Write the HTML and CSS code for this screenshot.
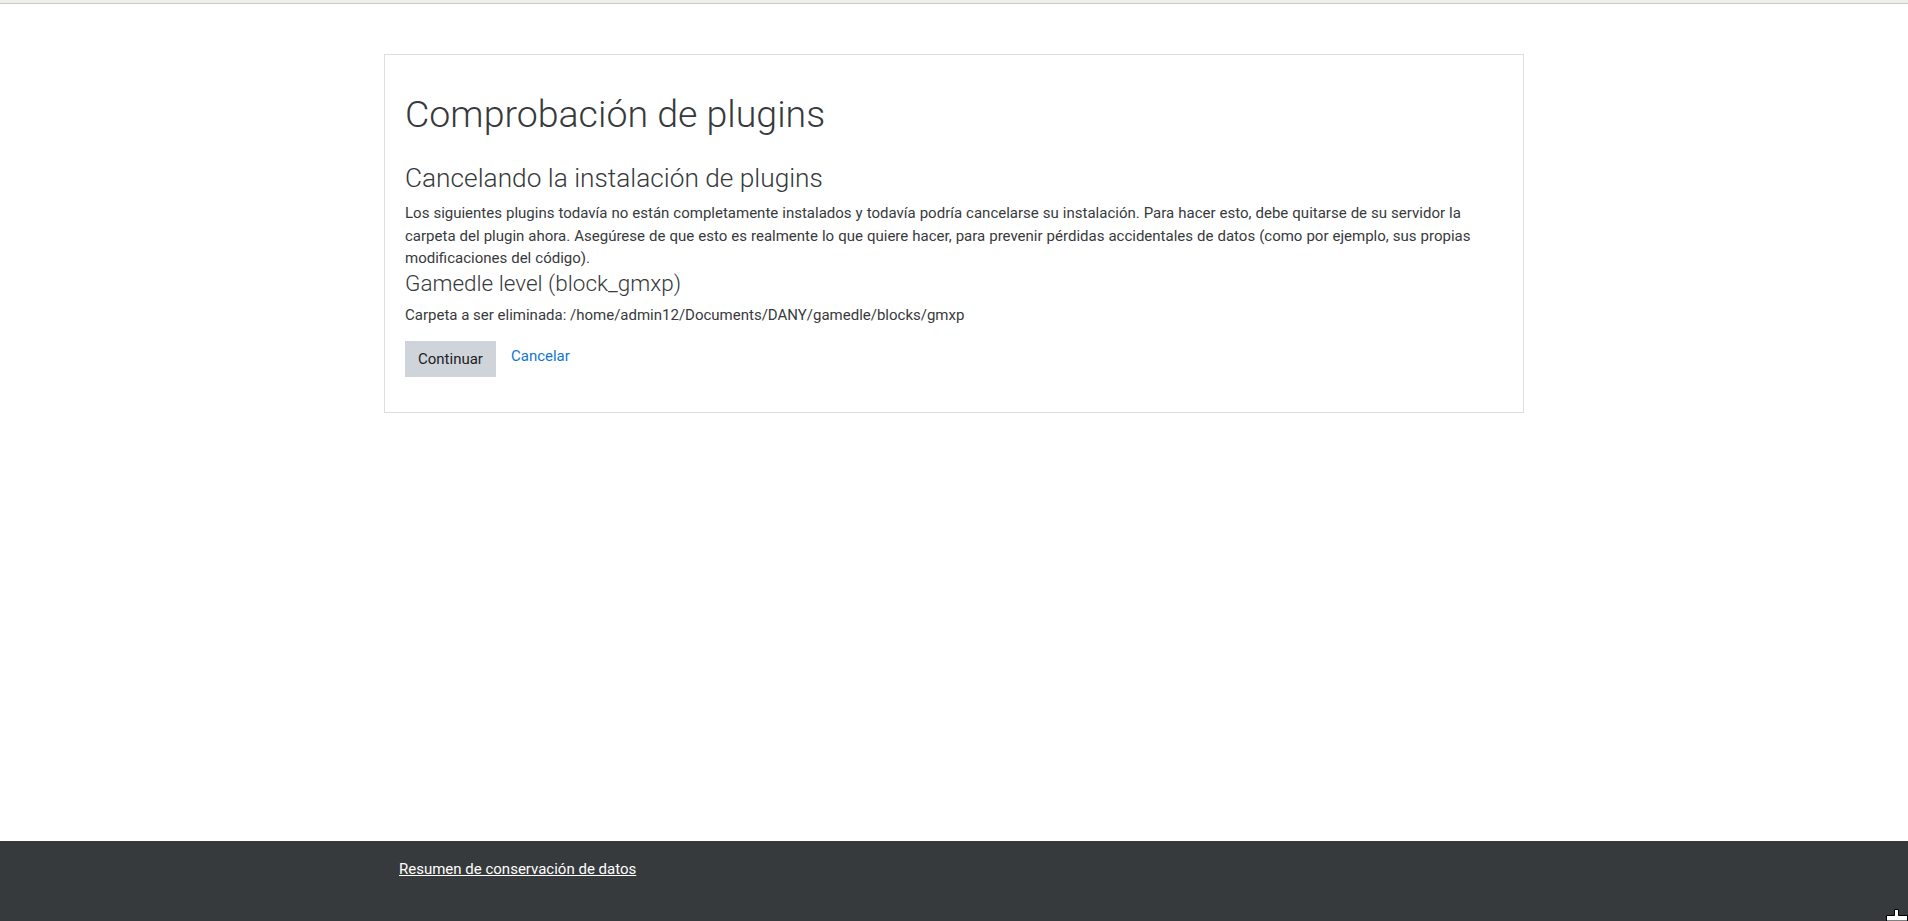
FILE: index.html
```html
<!DOCTYPE html>
<html lang="es">
<head>
<meta charset="utf-8">
<title>Comprobación de plugins</title>
<link rel="stylesheet" href="styles.css">
</head>
<body>
<div class="page">
  <div class="topbar"></div>
  <main class="main">
    <div class="card">
      <div class="card-body">
        <h1 class="title">Comprobación de plugins</h1>
        <h3 class="subtitle">Cancelando la instalación de plugins</h3>
        <p class="text intro">Los siguientes plugins todavía no están completamente instalados y todavía podría cancelarse su instalación. Para hacer esto, debe quitarse de su servidor la carpeta del plugin ahora. Asegúrese de que esto es realmente lo que quiere hacer, para prevenir pérdidas accidentales de datos (como por ejemplo, sus propias modificaciones del código).</p>
        <h4 class="plugin">Gamedle level (block_gmxp)</h4>
        <p class="text folder">Carpeta a ser eliminada: /home/admin12/Documents/DANY/gamedle/blocks/gmxp</p>
        <div class="actions">
          <button class="btn" type="button">Continuar</button>
          <a class="cancel" href="#">Cancelar</a>
        </div>
      </div>
    </div>
  </main>
  <footer class="footer">
    <div class="footer-inner">
      <a class="footer-link" href="#">Resumen de conservación de datos</a>
    </div>
  </footer>
</div>
<svg class="cursor" width="22" height="12" viewBox="0 0 22 12"><path d="M8.5 0.5 H12.5 V6.5 H21.5 V12 H0.5 V6.5 H8.5 Z" fill="#fff" stroke="#000" stroke-width="1"/></svg>
</body>
</html>
```
FILE: styles.css
```css
html, body {
  margin: 0;
  padding: 0;
}
body {
  font-family: Roboto, "Noto Sans", Arial, sans-serif;
  font-size: 15px;
  line-height: 1.5;
  color: #373a3c;
  background: #fff;
  overflow: hidden;
}
.page {
  display: flex;
  flex-direction: column;
  min-height: 100vh;
}
.topbar {
  height: 3px;
  background: #efeeea;
  border-bottom: 1px solid #cdcdca;
}
.main {
  flex: 1;
  padding-top: 50px;
}
.card {
  width: 1138px;
  margin: 0 auto;
  border: 1px solid #dedede;
  background: #fff;
}
.card-body {
  padding: 20px 20px 35px 20px;
}
.title {
  font-size: 37.5px;
  font-weight: 300;
  line-height: 1.2;
  margin: 17px 0 26px 0;
}
.subtitle {
  font-size: 26.25px;
  font-weight: 300;
  line-height: 1.2;
  margin: 0 0 7.5px 0;
}
.plugin {
  font-size: 22.5px;
  font-weight: 300;
  line-height: 1.2;
  margin: 0 0 7.5px 0;
}
.text {
  margin: 0;
}
.intro {
  word-spacing: 0.3px;
}
.folder {
  margin-bottom: 14px;
}
.actions {
  display: flex;
  align-items: flex-start;
  gap: 15px;
}
.btn {
  font-family: inherit;
  font-size: 15px;
  line-height: 1.5;
  color: #1d2125;
  background: #ced4da;
  border: 1px solid #ced4da;
  border-radius: 0;
  padding: 6px 12px;
}
.cancel {
  color: #1177d1;
  text-decoration: none;
  padding-top: 4px;
}
.footer {
  height: 80px;
  background: #373a3c;
}
.footer-inner {
  width: 1110px;
  margin: 0 auto;
  padding-top: 17px;
}
.footer-link {
  color: #fff;
  text-decoration: underline;
}
.cursor {
  position: fixed;
  right: 0;
  bottom: 0;
}
```
